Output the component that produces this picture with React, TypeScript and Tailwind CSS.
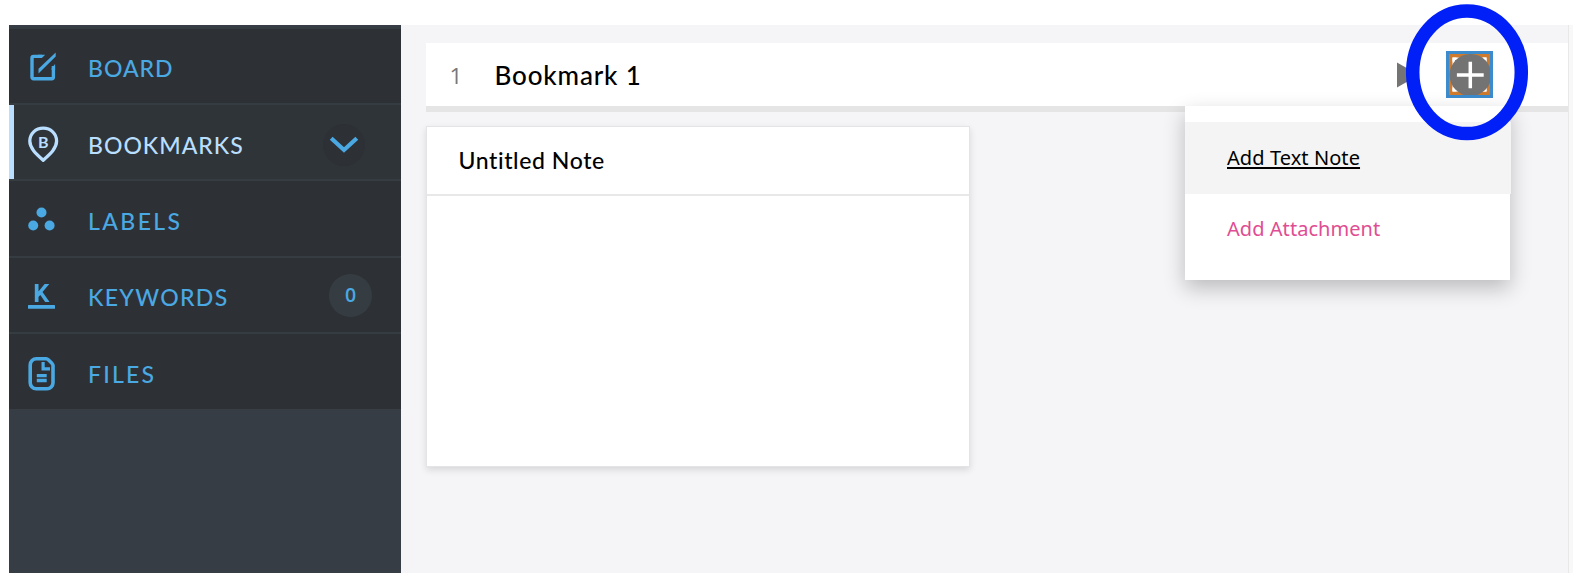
import type { ReactNode } from "react";

function BoardIcon() {
  return (
    <svg width="32" height="36" viewBox="0 0 32 36" fill="none" stroke="#4aa8e2">
      <path d="M14 6.400H5.500a1.500 1.500 0 0 0-1.500 1.500v19.300a1.500 1.500 0 0 0 1.500 1.500h18.400a1.500 1.500 0 0 0 1.500-1.500V16" strokeWidth="3.400" />
      <path d="M27.700 2.600V6.600L14.800 19.300 10.500 23.600V18.800z" fill="#4aa8e2" stroke="none" />
      <path d="M17.200 4.700 13.900 8.100H10V4.700zM27.100 14 23.700 18V20h3.400z" fill="#4aa8e2" stroke="none" />
    </svg>
  );
}

function BookmarkIcon() {
  return (
    <svg width="32" height="38" viewBox="0 0 32 38">
      <path
        d="M15.200 2.200C7.700 2.200 1.800 7.600 1.800 15.100c0 7.200 6.200 12.600 13.400 19.100 7.200-6.500 13.400-11.900 13.400-19.100C28.600 7.600 22.700 2.200 15.200 2.200z"
        fill="none"
        stroke="#b9deff"
        strokeWidth="3.300"
        strokeLinejoin="round"
      />
      <text x="15.200" y="21.500" textAnchor="middle" fontSize="16" fontWeight="700" fill="#b9deff" className="font-['Lato',sans-serif]">
        B
      </text>
    </svg>
  );
}

function LabelsIcon() {
  return (
    <svg width="32" height="30" viewBox="0 0 32 30" fill="#4aa8e2">
      <circle cx="13.500" cy="6.500" r="5" />
      <circle cx="5.200" cy="19.500" r="5" />
      <circle cx="21.600" cy="19.500" r="5" />
    </svg>
  );
}

function KeywordsIcon() {
  return (
    <svg width="32" height="30" viewBox="0 0 32 30" fill="#4aa8e2">
      <path d="M6.800 2h3.700v7.500L16.600 2h4.700l-6.800 8.100 7.100 9.900h-4.400l-4.900-7.100-1.800 2V20H6.800z" />
      <rect x="0" y="23" width="27" height="3.800" rx="0.500" />
    </svg>
  );
}

function FilesIcon() {
  return (
    <svg width="32" height="36" viewBox="0 0 32 36" fill="#4aa8e2">
      <path
        d="M8.500 2.700h9.800c1.300 0 6.700 5.100 6.700 6.600v17.400a6 6 0 0 1-6 6H8.200a6 6 0 0 1-6-6V8.900a6.200 6.200 0 0 1 6.300-6.200z"
        fill="none"
        stroke="#4aa8e2"
        strokeWidth="3.600"
      />
      <path d="M13.500 6h3.200v5.200H22v3.200h-8.500zM8.800 18h9.900v3.200H8.800zM8.800 22.800h9.900v3.400H8.800z" />
    </svg>
  );
}

type RowProps = { icon: ReactNode; label: string; tracking: string; active?: boolean; children?: ReactNode };

function NavRow({ icon, label, tracking, active, children }: RowProps) {
  return (
    <li
      className={
        "flex h-[76.400px] items-center border-t-2 border-[#363d42] " +
        (active ? "bg-[#2e3438] text-[#b9deff]" : "bg-[#2d3035] text-[#4aa8e2]")
      }
    >
      <span className={"h-full w-[5px] " + (active ? "bg-[#b9deff]" : "")} />
      <span className="ml-[14px] flex w-[60px] pt-[5px]">{icon}</span>
      <span className={"flex-1 pt-[5px] text-[23px] leading-7 font-medium " + tracking}>{label}</span>
      {children}
    </li>
  );
}

function Sidebar() {
  return (
    <nav className="w-[392px] shrink-0 bg-[#363d44] pt-[1.600px] font-['Lato',sans-serif]">
      <ul>
        <NavRow icon={<BoardIcon />} label="BOARD" tracking="tracking-[1px]" />
        <NavRow icon={<BookmarkIcon />} label="BOOKMARKS" tracking="tracking-[1px]" active>
          <span className="mt-[5px] mr-[36px] flex size-[42px] items-center justify-center rounded-full bg-[#2d3035]">
            <svg width="30" height="18" viewBox="0 0 30 18" fill="none" stroke="#4aa8e2" strokeWidth="4.200">
              <path d="M2.200 2.200 15 14 27.800 2.200" />
            </svg>
          </span>
        </NavRow>
        <NavRow icon={<LabelsIcon />} label="LABELS" tracking="tracking-[2.400px]" />
        <NavRow icon={<KeywordsIcon />} label="KEYWORDS" tracking="tracking-[1.350px]">
          <span className="mt-[2px] mr-[29px] flex size-[43px] items-center justify-center rounded-full bg-[#363d42] pb-[2px] font-['Open_Sans',sans-serif] text-[19.500px] font-semibold">
            0
          </span>
        </NavRow>
        <NavRow icon={<FilesIcon />} label="FILES" tracking="tracking-[2.200px]" />
      </ul>
    </nav>
  );
}

function AddMenu() {
  return (
    <div className="absolute top-[63px] right-[58px] h-[174px] w-[325px] bg-white pt-[16px] font-['Noto_Sans',sans-serif] text-[20px] shadow-[0_8px_20px_rgba(0,0,0,0.240)]">
      <div className="-mr-px h-[72px] bg-[#f4f4f4] pl-[42px] leading-[72px] tracking-[0.080px] text-black underline decoration-[1.500px] underline-offset-2">
        Add Text Note
      </div>
      <div className="pl-[42px] leading-[70px] tracking-[0.050px] text-[#df4d92]">Add Attachment</div>
    </div>
  );
}

export default function App() {
  return (
    <div className="relative flex h-[584px] w-[1580px] overflow-hidden bg-white pt-[25px] pr-[7px] pb-[11px] pl-[9px]">
      <Sidebar />
      <main className="min-w-0 flex-1 border-r-[4px] border-[#f8f8f8] bg-[#f5f5f8]">
        <div className="h-full border-r border-[#e8e8e8] pt-[18px] pl-[24.500px]">
          <header className="relative flex h-[69px] items-center border-b-[6px] border-[#e5e5e5] bg-white font-['Lato',sans-serif]">
            <span className="w-[69px] pt-[3px] pl-[24px] font-['Open_Sans',sans-serif] text-[22.500px] text-[#777]">1</span>
            <h1 className="flex-1 pt-[2px] text-[26px] font-medium tracking-[0.850px] text-black">Bookmark 1</h1>
            <svg className="mr-[27px]" width="22" height="26" viewBox="0 0 22 26">
              <path d="M0 0.500 22 13 0 25.500z" fill="#747474" />
            </svg>
            <button className="mr-[75px] flex size-[47px] items-center justify-center border-[3px] border-[#3c8bcd] bg-white">
              <svg width="41" height="41" viewBox="0 0 41 41">
                <path d="M1.700 1.700h37.600v37.600H1.700z" fill="none" stroke="#d07a2d" strokeWidth="3.500" />
                <path d="M7.500 4.700h-2.800v2.800M33.500 4.700h2.800v2.800M7.500 36.300h-2.800v-2.800M33.500 36.300h2.800v-2.800" fill="none" stroke="#fff" strokeWidth="2.500" />
                <path d="M6 6h29v29H6z" fill="#d07a2d" />
                <circle cx="21.500" cy="21" r="21" fill="#737373" />
                <path d="M21.300 7.700v26.600M7.900 21h26.800" stroke="#fff" strokeWidth="3.500" />
              </svg>
            </button>
            <AddMenu />
          </header>
          <article className="mt-[14px] flex h-[341px] w-[544.500px] flex-col border-[1.500px] border-[#e4e4e6] bg-white shadow-[0_3px_7px_rgba(0,0,0,0.120)]">
            <h2 className="flex h-[69px] items-center border-b-2 border-[#e8e8e8] pb-[1px] pl-[32px] font-['Lato',sans-serif] text-[23px] font-medium tracking-[0.600px] text-black">
              Untitled Note
            </h2>
          </article>
        </div>
      </main>
      <svg className="absolute top-[4px] left-[1406px]" width="123" height="137" viewBox="0 0 123 137" fill="none">
        <ellipse cx="61" cy="68.300" rx="54.300" ry="61.300" stroke="#0020f7" strokeWidth="13.500" />
      </svg>
    </div>
  );
}
